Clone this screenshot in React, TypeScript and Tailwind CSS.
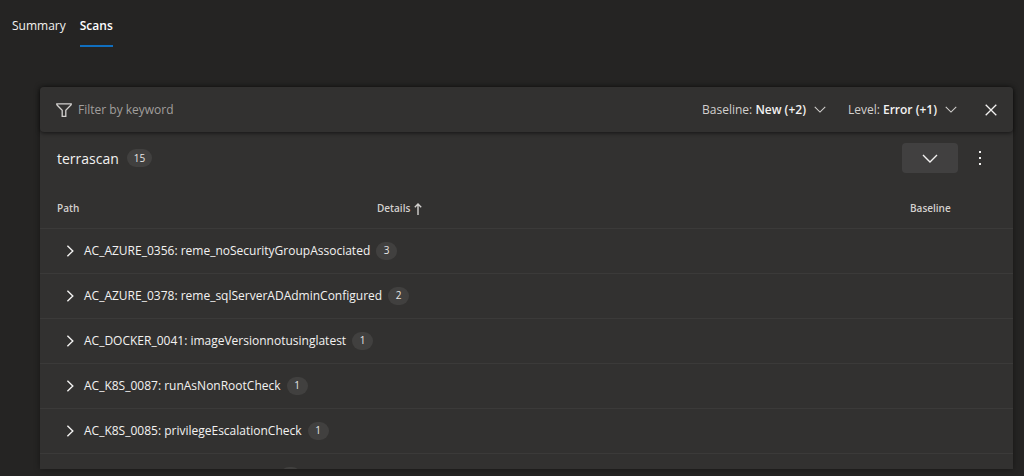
import type { ReactNode } from "react";

type Rule = { name: string; count: string };

const rules: Rule[] = [
  { name: "AC_AZURE_0356: reme_noSecurityGroupAssociated", count: "3" },
  { name: "AC_AZURE_0378: reme_sqlServerADAdminConfigured", count: "2" },
  { name: "AC_DOCKER_0041: imageVersionnotusinglatest", count: "1" },
  { name: "AC_K8S_0087: runAsNonRootCheck", count: "1" },
  { name: "AC_K8S_0085: privilegeEscalationCheck", count: "1" },
];

function Badge({ children }: { children?: ReactNode }) {
  return (
    <span className="inline-flex h-[18px] min-w-[21px] items-center justify-center rounded-full bg-[#41403f] px-[7px] text-[10px] text-[#e8e7e6]">
      {children}
    </span>
  );
}

function ChevronDown({ className }: { className: string }) {
  return (
    <svg viewBox="0 0 16 9" className={className} fill="none" stroke="currentColor" aria-hidden="true">
      <path d="M1 1l7 7 7-7" strokeWidth="1.4" />
    </svg>
  );
}

function ChevronRight() {
  return (
    <svg viewBox="0 0 8 12" className="h-3 w-2" fill="none" stroke="currentColor" aria-hidden="true">
      <path d="M1.4 0.8L6.8 6 1.4 11.2" strokeWidth="1.4" />
    </svg>
  );
}

function FilterMenu({ label, value }: { label: string; value: string }) {
  return (
    <button type="button" className="flex items-center gap-2 whitespace-nowrap text-[#d2d0ce]">
      <span>
        {label}: <span className="font-semibold text-[#f3f2f1]">{value}</span>
      </span>
      <ChevronDown className="h-[7px] w-3" />
    </button>
  );
}

export default function App() {
  return (
    <div className="flex h-screen flex-col bg-[#252423] pb-[7px] font-['Segoe_UI','Open_Sans',sans-serif] text-[12px] text-[#f3f2f1]">
      <nav className="flex gap-3.5 px-3 pt-[5px]">
        <a href="#summary" className="flex h-[42px] items-center">Summary</a>
        <a href="#scans" aria-current="page" className="flex h-[42px] items-center border-b-2 border-[#106ebe] pt-0.5 font-semibold text-white">
          Scans
        </a>
      </nav>

      <main className="mt-10 mr-[11px] ml-10 flex min-h-0 flex-1 flex-col rounded-t bg-[#323130] shadow-[0_0_6px_rgba(0,0,0,0.4)]">
        <div className="relative flex h-[45px] shrink-0 items-center rounded bg-[#323130] pr-4 pl-4 shadow-[0_1px_4px_rgba(0,0,0,0.6)]">
          <label className="flex flex-1 items-center gap-[6px]">
            <svg viewBox="0 0 16 14" className="h-[14px] w-4" fill="none" stroke="#d2d0ce" strokeWidth="1.3" aria-hidden="true">
              <path d="M0.8 0.8h14.4v1L9.8 7.3v6H6.2v-6L0.8 1.8z" />
            </svg>
            <input
              type="text"
              aria-label="Filter by keyword"
              placeholder="Filter by keyword"
              className="min-w-0 flex-1 bg-transparent outline-none placeholder:text-[#a19f9d]"
            />
          </label>
          <div className="flex items-center gap-[22px]">
            <FilterMenu label="Baseline" value="New (+2)" />
            <FilterMenu label="Level" value="Error (+1)" />
          </div>
          <button type="button" aria-label="Clear filters" className="ml-7">
            <svg viewBox="0 0 12 12" className="h-3 w-3" stroke="currentColor" strokeWidth="1.3" aria-hidden="true">
              <path d="M0.7 0.7l10.6 10.6M11.3 0.7L0.7 11.3" />
            </svg>
          </button>
        </div>

        <section className="min-h-0 flex-1 overflow-hidden">
          <header className="flex h-[52px] items-center pr-[27px] pl-[17px]">
            <h2 className="mr-2 text-[14px]">terrascan</h2>
            <Badge>15</Badge>
            <button
              type="button"
              aria-label="Collapse"
              className="ml-auto flex h-[30px] w-14 items-center justify-center rounded-sm bg-[#414040]"
            >
              <ChevronDown className="h-[9px] w-4" />
            </button>
            <button type="button" aria-label="More options" className="ml-4 flex w-3 justify-center">
              <svg viewBox="0 0 2 14" className="h-[14px] w-[2px]" fill="currentColor" aria-hidden="true">
                <path d="M0 0h2v2H0zM0 6h2v2H0zM0 12h2v2H0z" />
              </svg>
            </button>
          </header>

          <table className="w-full table-fixed border-collapse text-left">
            <thead>
              <tr className="h-11 border-b border-[#3b3a39] text-[10px] text-[#d2d0ce]">
                <th scope="col" className="w-[337px] pt-1.5 pl-[17px] font-semibold">Path</th>
                <th scope="col" className="pt-1.5 font-semibold">
                  <button type="button" className="flex items-center gap-1">
                    Details
                    <svg viewBox="0 0 8 12" className="h-3 w-2" fill="none" stroke="currentColor" strokeWidth="1.4" aria-hidden="true">
                      <path d="M4 12V1M0.8 4.2L4 1l3.2 3.2" />
                    </svg>
                  </button>
                </th>
                <th scope="col" className="w-[103px] pt-1.5 font-semibold">Baseline</th>
              </tr>
            </thead>
            <tbody>
              {rules.map((rule) => (
                <tr key={rule.name} className="h-[45px] border-b border-[#3b3a39]">
                  <td colSpan={3} className="pl-[26px]">
                    <button type="button" className="flex items-center">
                      <ChevronRight />
                      <span className="mr-1.5 ml-[10px]">{rule.name}</span>
                      <Badge>{rule.count}</Badge>
                    </button>
                  </td>
                </tr>
              ))}
              <tr className="h-[45px]">
                <td colSpan={3} className="pl-[26px]">
                  <div className="flex items-center">
                    <span className="ml-[214px]" />
                    <Badge />
                  </div>
                </td>
              </tr>
            </tbody>
          </table>
        </section>
      </main>
    </div>
  );
}
